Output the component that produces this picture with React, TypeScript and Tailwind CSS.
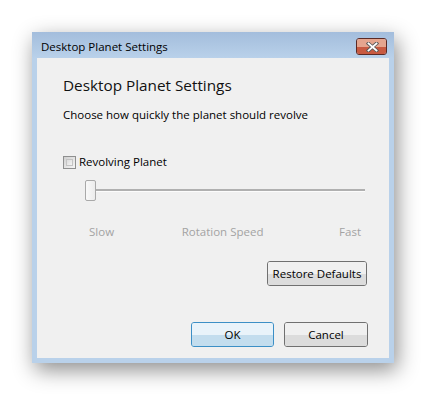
import React from "react";

const font = { fontFamily: '"Open Sans", "Noto Sans", sans-serif' };

function Btn({ children, primary = false, w }: { children: React.ReactNode; primary?: boolean; w: string }) {
  return (
    <div
      className={`${w} h-[25px] rounded-[3px] border flex items-center justify-center text-[11.5px] text-black relative overflow-hidden ${
        primary
          ? "border-[#3c8fc6] shadow-[0_0_0_1px_#7fd3f7_inset]"
          : "border-[#707070] shadow-[0_0_0_1px_#fbfbfb_inset]"
      }`}
    >
      <div className="absolute inset-0 flex flex-col">
        <div className={`flex-1 ${primary ? "bg-[#e9f3fa]" : "bg-[#f0f0f0]"}`} />
        <div className={`flex-1 ${primary ? "bg-[#c3ddee]" : "bg-[#dcdcdc]"}`} />
      </div>
      <span className="relative">{children}</span>
    </div>
  );
}

export default function App() {
  return (
    <div className="w-[426px] h-[396px] bg-white pl-[32px] pt-[32px]" style={font}>
      <div className="w-[362px] h-[331px] bg-[#b9d1ea] flex flex-col shadow-[3px_7px_20px_rgba(0,0,0,0.45)]">
        <div className="h-[26px] flex items-start justify-between pl-[9px] pr-[7px] bg-gradient-to-b from-[#a3bddc] to-[#b9d1ea]">
          <span className="text-[11.5px] text-black leading-[16px] mt-[7px]">Desktop Planet Settings</span>
          <div className="mt-[6px] w-[31px] h-[17px] rounded-[3px] border border-[#5b2a25] overflow-hidden relative flex flex-col">
            <div className="flex-1 bg-[#e5a58e]" />
            <div className="flex-1 bg-[#c85a41]" />
            <svg className="absolute left-[9px] top-[3px]" width="13" height="10" viewBox="0 0 13 10">
              <path d="M2.5 1.5 L10.5 8.5 M10.5 1.5 L2.5 8.5" stroke="#5a5a5a" strokeWidth="3.6" strokeLinecap="square" />
              <path d="M2.5 1.5 L10.5 8.5 M10.5 1.5 L2.5 8.5" stroke="#ffffff" strokeWidth="1.8" strokeLinecap="square" />
            </svg>
          </div>
        </div>
        <div className="mx-[5px] mb-[5px] flex-1 bg-[#f0f0f0] flex flex-col pl-[26px] pr-[22px]">
          <div className="mt-[16px] text-[15.3px] leading-[22px] text-[#111]">Desktop Planet Settings</div>
          <div className="mt-[11px] text-[11.5px] leading-[16px] text-black">Choose how quickly the planet should revolve</div>
          <div className="mt-[31px] flex items-center gap-[3px]">
            <div className="w-[13px] h-[13px] border border-[#8e8f8f] bg-gradient-to-br from-[#d0d0d0] to-[#f6f6f6] p-[2px]">
              <div className="w-full h-full border border-[#c4c4c4] bg-gradient-to-br from-[#dcdcdc] to-[#f4f4f4]" />
            </div>
            <span className="text-[11.5px] leading-[16px] text-black">Revolving Planet</span>
          </div>
          <div className="mt-[10px] ml-[22px] relative h-[21px] w-[280px]">
            <div className="absolute left-0 right-0 top-[9px] h-[2px] bg-[#b0b0b0] border-b border-[#fcfcfc] box-content" />
            <div className="absolute left-0 top-0 w-[11px] h-[21px] rounded-[2px] border border-[#a9a9a9] bg-gradient-to-r from-[#f9f9f9] to-[#ececec]" />
          </div>
          <div className="mt-[23px] ml-[26px] w-[272px] flex justify-between text-[11.5px] leading-[16px] text-[#a3a3a3]">
            <span>Slow</span>
            <span className="mr-[8px]">Rotation Speed</span>
            <span>Fast</span>
          </div>
          <div className="mt-[21px] flex justify-end">
            <Btn w="w-[100px]">Restore Defaults</Btn>
          </div>
          <div className="mt-[36px] flex justify-end gap-[10px] mr-[-1px]">
            <Btn w="w-[83px]" primary>OK</Btn>
            <Btn w="w-[84px]">Cancel</Btn>
          </div>
        </div>
      </div>
    </div>
  );
}
